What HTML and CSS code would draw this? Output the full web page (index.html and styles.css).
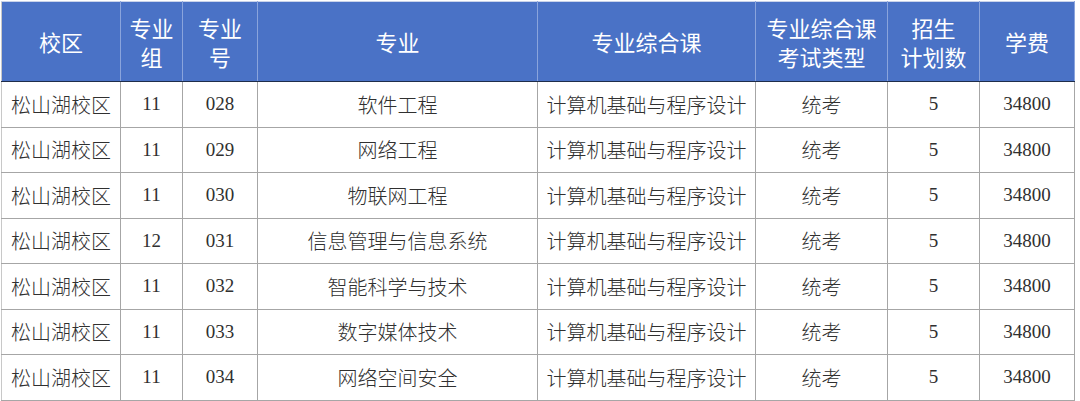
FILE: index.html
```html
<!DOCTYPE html>
<html lang="zh">
<head>
<meta charset="utf-8">
<link rel="stylesheet" href="styles.css">
</head>
<body>
<div class="wrap">
<table class="plan">
  <colgroup>
    <col class="c1"><col class="c2"><col class="c3"><col class="c4"><col class="c5"><col class="c6"><col class="c7"><col class="c8">
  </colgroup>
  <thead>
    <tr>
      <th>校区</th>
      <th>专业<br>组</th>
      <th>专业<br>号</th>
      <th>专业</th>
      <th>专业综合课</th>
      <th>专业综合课<br>考试类型</th>
      <th>招生<br>计划数</th>
      <th>学费</th>
    </tr>
  </thead>
  <tbody>
    <tr><td class="cn">松山湖校区</td><td class="num">11</td><td class="num">028</td><td class="cn">软件工程</td><td class="cn">计算机基础与程序设计</td><td class="cn">统考</td><td class="num">5</td><td class="num">34800</td></tr>
    <tr><td class="cn">松山湖校区</td><td class="num">11</td><td class="num">029</td><td class="cn">网络工程</td><td class="cn">计算机基础与程序设计</td><td class="cn">统考</td><td class="num">5</td><td class="num">34800</td></tr>
    <tr><td class="cn">松山湖校区</td><td class="num">11</td><td class="num">030</td><td class="cn">物联网工程</td><td class="cn">计算机基础与程序设计</td><td class="cn">统考</td><td class="num">5</td><td class="num">34800</td></tr>
    <tr><td class="cn">松山湖校区</td><td class="num">12</td><td class="num">031</td><td class="cn">信息管理与信息系统</td><td class="cn">计算机基础与程序设计</td><td class="cn">统考</td><td class="num">5</td><td class="num">34800</td></tr>
    <tr><td class="cn">松山湖校区</td><td class="num">11</td><td class="num">032</td><td class="cn">智能科学与技术</td><td class="cn">计算机基础与程序设计</td><td class="cn">统考</td><td class="num">5</td><td class="num">34800</td></tr>
    <tr><td class="cn">松山湖校区</td><td class="num">11</td><td class="num">033</td><td class="cn">数字媒体技术</td><td class="cn">计算机基础与程序设计</td><td class="cn">统考</td><td class="num">5</td><td class="num">34800</td></tr>
    <tr><td class="cn">松山湖校区</td><td class="num">11</td><td class="num">034</td><td class="cn">网络空间安全</td><td class="cn">计算机基础与程序设计</td><td class="cn">统考</td><td class="num">5</td><td class="num">34800</td></tr>
  </tbody>
</table>
</div>
</body>
</html>
```

FILE: styles.css
```css
html, body {
  margin: 0;
  padding: 0;
  background: #ffffff;
}
.wrap {
  padding: 1px 0 0 1px;
  width: 1074px;
}
.plan {
  border-collapse: collapse;
  table-layout: fixed;
  width: 1073px;
  font-family: "Noto Sans CJK SC", "Liberation Serif", sans-serif;
}
.c1 { width: 119px; }
.c2 { width: 62px; }
.c3 { width: 75px; }
.c4 { width: 280px; }
.c5 { width: 218px; }
.c6 { width: 132px; }
.c7 { width: 92px; }
.c8 { width: 95px; }

.plan th {
  background: #4a72c6;
  color: #ffffff;
  font-weight: 400;
  font-size: 22px;
  line-height: 29px;
  height: 79px;
  padding: 0;
  text-align: center;
  vertical-align: middle;
  border: 1px solid #8aa4dc;
  border-bottom: 1px solid #1f2d4a;
  border-top: 1px solid #c9d3ea;
}
.plan th:first-child { border-left: 1px solid #c8c8c8; }
.plan td {
  height: 44.5px;
  padding: 0;
  text-align: center;
  vertical-align: middle;
  color: #303030;
  border: 1px solid #a6a6a6;
  white-space: nowrap;
}
.plan td:first-child { border-left: 1px solid #c8c8c8; }
.plan td.cn {
  font-family: "Noto Sans CJK SC", sans-serif;
  font-size: 20px;
  font-weight: 300;
}
.plan td.num {
  font-family: "Liberation Serif", serif;
  font-size: 19px;
}
```
